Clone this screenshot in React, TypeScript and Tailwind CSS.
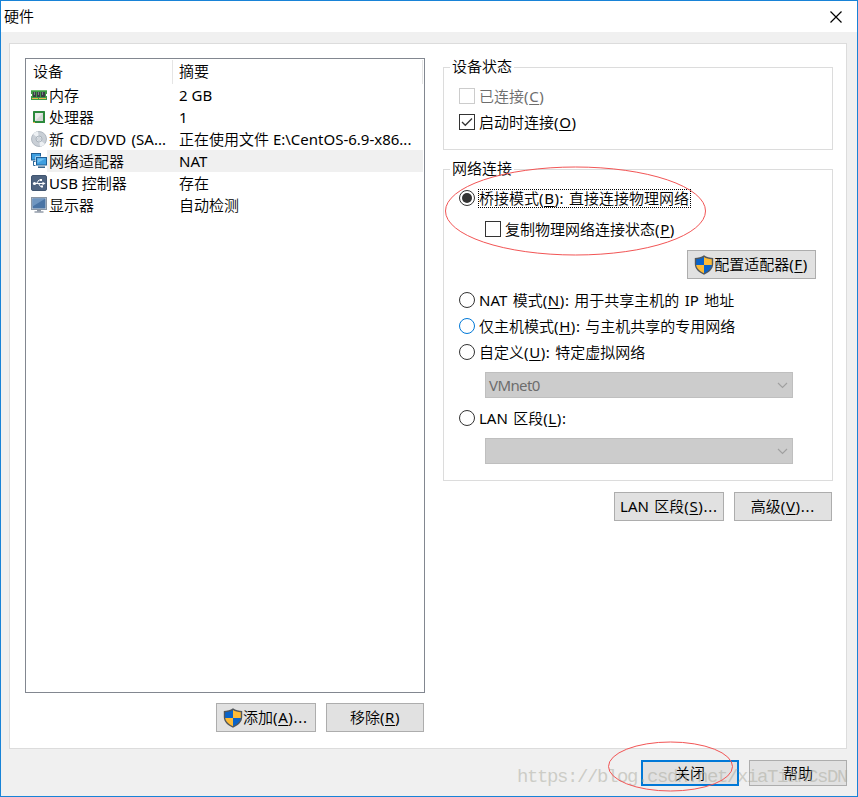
import { useState } from "react";
import type { ReactNode } from "react";
import { clsx } from "clsx";

type Device = {
  id: string;
  name: string;
  summary: string;
  icon: ReactNode;
};

function MemoryIcon() {
  return (
    <svg width="16" height="16" viewBox="0 0 16 16" shapeRendering="crispEdges">
      <rect x="0" y="3" width="16" height="10" fill="#3f9a45" />
      <rect x="0" y="3" width="16" height="1" fill="#6fbf73" />
      <rect x="2" y="5" width="3" height="5" fill="#3a3f45" />
      <rect x="6" y="5" width="3" height="5" fill="#3a3f45" />
      <rect x="10" y="5" width="4" height="5" fill="#3a3f45" />
      <rect x="3" y="5" width="1" height="3" fill="#7b8188" />
      <rect x="7" y="5" width="1" height="3" fill="#7b8188" />
      <rect x="11" y="5" width="1" height="3" fill="#7b8188" />
      <rect x="1" y="11" width="6" height="1" fill="#e7b94f" />
      <rect x="8" y="11" width="7" height="1" fill="#e7b94f" />
      <rect x="0" y="7" width="1" height="2" fill="#fff" />
      <rect x="15" y="7" width="1" height="2" fill="#fff" />
    </svg>
  );
}

function CpuIcon() {
  return (
    <svg width="16" height="16" viewBox="0 0 16 16">
      <rect x="2" y="2" width="12" height="12" rx="0.5" fill="#2c8a3c" />
      <rect x="4" y="4" width="8" height="8" fill="#d3d6d4" />
      <path d="M4 4h8l-8 8z" fill="#e9ebe9" />
      <path d="M2 13.500h2" stroke="#e7b94f" />
    </svg>
  );
}

function DiscIcon() {
  return (
    <svg width="16" height="16" viewBox="0 0 16 16">
      <circle cx="8" cy="8" r="7.500" fill="#c9cfd6" stroke="#a3acb6" strokeWidth="0.8" />
      <path d="M8 8L2 3a8 8 0 0 1 5-2.500zM8 8l6 5a8 8 0 0 1-5 2.500z" fill="#eef1f4" />
      <circle cx="8" cy="8" r="3" fill="#dfe4e9" stroke="#99a3ae" strokeWidth="0.7" />
      <circle cx="8" cy="8" r="1.200" fill="#fff" stroke="#8f99a5" strokeWidth="0.5" />
    </svg>
  );
}

function NetworkIcon() {
  return (
    <svg width="16" height="16" viewBox="0 0 16 16">
      <path d="M2.500 8v4.500h3" fill="none" stroke="#2d6a9c" />
      <rect x="0.500" y="0.500" width="9" height="6.500" fill="#3f9fe0" stroke="#1f5f96" />
      <path d="M2 8.500h3" stroke="#2d6a9c" />
      <rect x="5.500" y="4.500" width="10" height="7.500" fill="#3f9fe0" stroke="#fff" strokeWidth="2" />
      <rect x="5.500" y="4.500" width="10" height="7.500" fill="#3f9fe0" stroke="#1f5f96" />
      <path d="M6.500 5.500h8l-8 4.500z" fill="#6fc0f2" />
      <path d="M7 14.200h7" stroke="#2f5f88" strokeWidth="1.500" />
    </svg>
  );
}

function UsbIcon() {
  return (
    <svg width="16" height="16" viewBox="0 0 16 16">
      <rect x="0.500" y="0.500" width="15" height="15" rx="1.500" fill="#4f6480" stroke="#415570" />
      <circle cx="3.500" cy="8.500" r="1.600" fill="#fff" />
      <path d="M3 8.500h9M5.500 8.500l2.500-3.500h1.500M7.500 8.500l2 3h1.500" stroke="#fff" fill="none" />
      <path d="M11.500 6.700v3.600l3-1.800z" fill="#fff" />
      <rect x="9" y="4" width="2" height="2" fill="#fff" />
      <rect x="10" y="10.500" width="2" height="2" fill="#fff" />
    </svg>
  );
}

function DisplayIcon() {
  return (
    <svg width="16" height="16" viewBox="0 0 16 16">
      <rect x="0.500" y="0.500" width="15" height="12" fill="#d5dae1" stroke="#8b96a4" />
      <rect x="1.500" y="1.500" width="13" height="10" fill="#4a74a5" />
      <path d="M1.500 1.500h13l-13 8z" fill="#7096c0" />
      <path d="M6 13h4v1.500H6z" fill="#8d97a3" />
      <path d="M3.500 15h9" stroke="#8b96a4" strokeWidth="1.400" />
    </svg>
  );
}

function ShieldIcon() {
  return (
    <svg width="20" height="20" viewBox="0 0 20 20" className="mt-px -ml-px shrink-0">
      <path d="M10 .3C7.500 2.200 4 3 .8 3V9c0 5.200 4.200 8.300 9.200 10.800C15 17.300 19.200 14.200 19.200 9V3C16 3 12.500 2.200 10 .3z" fill="#53575b" />
      <path d="M10 2C8 3.400 5 4.100 2.200 4.300V10H10z" fill="#0a63c8" />
      <path d="M10 2c2 1.400 5 2.100 7.800 2.300V10H10z" fill="#fdbb36" />
      <path d="M2.200 10H10v8.300C6 16.300 2.700 13.700 2.200 10z" fill="#fdbb36" />
      <path d="M17.800 10H10v8.300c4-2 7.300-4.600 7.800-8.300z" fill="#0a63c8" />
    </svg>
  );
}

const devices: Device[] = [
  { id: "memory", name: "内存", summary: "2 GB", icon: <MemoryIcon /> },
  { id: "cpu", name: "处理器", summary: "1", icon: <CpuIcon /> },
  { id: "cd", name: "新 CD/DVD (SA...", summary: "正在使用文件 E:\\CentOS-6.9-x86...", icon: <DiscIcon /> },
  { id: "network", name: "网络适配器", summary: "NAT", icon: <NetworkIcon /> },
  { id: "usb", name: "USB 控制器", summary: "存在", icon: <UsbIcon /> },
  { id: "display", name: "显示器", summary: "自动检测", icon: <DisplayIcon /> },
];

// label followed by its underlined access key
function Label({ text, hot, rest = "" }: { text: string; hot: string; rest?: string }) {
  return (
    <span className="whitespace-pre [word-spacing:1.5px]">
      {text}
      <span className="tracking-[0.6px]">
        (<span className="underline decoration-1 underline-offset-2">{hot}</span>)
      </span>
      <span className={clsx(rest === "..." && "tracking-[0.8px]")}>{rest}</span>
    </span>
  );
}

function Button({ className, children }: { className: string; children: ReactNode }) {
  return (
    <button
      className={clsx(
        "flex shrink-0 items-center justify-center border border-[#adadad] bg-[#e1e1e1] pb-px whitespace-pre",
        className
      )}
    >
      {children}
    </button>
  );
}

function Checkbox({ checked, disabled }: { checked?: boolean; disabled?: boolean }) {
  return (
    <span
      className={clsx(
        "flex size-4 shrink-0 items-center justify-center border bg-white",
        disabled ? "border-[#cccccc]" : "border-[#333333]"
      )}
    >
      {checked && (
        <svg width="14" height="14" viewBox="0 0 14 14">
          <path d="M2 7l3.300 3.300L12 3.500" fill="none" stroke="#333" strokeWidth="1.300" />
        </svg>
      )}
    </span>
  );
}

function Radio({ checked, hover }: { checked?: boolean; hover?: boolean }) {
  return (
    <span
      className={clsx(
        "flex size-4 shrink-0 items-center justify-center rounded-full border bg-white",
        hover ? "border-[#0078d7]" : "border-[#333333]"
      )}
    >
      {checked && <span className="size-2.5 rounded-full bg-[#333333]" />}
    </span>
  );
}

function Combo({ value }: { value: string }) {
  return (
    <div className="ml-[41px] flex h-[26px] w-[308px] items-center justify-between border border-[#bfbfbf] bg-[#cccccc] pr-[4px] pl-[3px] text-[#6d6d6d]">
      <span className="tracking-[-0.6px]">{value}</span>
      <svg width="11" height="7" viewBox="0 0 11 7">
        <path d="M1 1l4.500 4.500L10 1" fill="none" stroke="#a0a0a0" strokeWidth="1.100" />
      </svg>
    </div>
  );
}

function Group({ title, className, children }: { title: string; className: string; children: ReactNode }) {
  return (
    <section className={clsx("w-[390px] border border-[#dcdcdc]", className)}>
      <h2 className="-mt-[12px] ml-[6px] h-[21px] w-[64px] bg-white pl-[2px] whitespace-nowrap">{title}</h2>
      {children}
    </section>
  );
}

export default function App() {
  const [selected, setSelected] = useState("network");

  return (
    <div className="relative flex h-[797px] w-[858px] flex-col border border-[#1883d7] bg-[#f0f0f0] font-['Noto_Sans','Noto_Sans_CJK_SC_DemiLight','Noto_Sans_CJK_SC_Light','Noto_Sans_CJK_SC',sans-serif] text-[15px] leading-5 text-black">
      <header className="flex h-[31px] shrink-0 items-center justify-between bg-white pr-[15px] pl-[3px]">
        <h1 className="pb-[2px]">硬件</h1>
        <svg width="12" height="12" viewBox="0 0 12 12">
          <path d="M.5.500l11 11M11.500.500l-11 11" stroke="#000" strokeWidth="1.200" />
        </svg>
      </header>

      <main className="mt-[11px] ml-[8px] flex h-[706px] w-[838px] shrink-0 border border-[#dcdcdc] bg-white pt-[14px] pl-[15px]">
        <div className="w-[400px]">
          <div className="h-[635px] border border-[#828790] pt-px pr-px">
            <div className="flex h-6">
              <span className="w-[147px] border-r border-[#e5e5e5] pt-px pl-[7px]">设备</span>
              <span className="flex-1 border-r border-[#e5e5e5] pt-px pl-[6px]">摘要</span>
            </div>
            {devices.map((d) => (
              <div key={d.id} className="flex h-[22px] pl-[5px]" onClick={() => setSelected(d.id)}>
                <span className="w-4 shrink-0 pt-[3px]">{d.icon}</span>
                <div
                  className={clsx(
                    "flex flex-1 items-center whitespace-pre",
                    selected === d.id && "bg-[#f0f0f0]"
                  )}
                >
                  <span className={clsx("w-[132px] shrink-0 pl-[2px]", d.id === "cd" && "[word-spacing:1.5px]")}>
                    {d.name}
                  </span>
                  <span>{d.summary}</span>
                </div>
              </div>
            ))}
          </div>
          <div className="mt-[10px] flex justify-end gap-[10px] pr-px">
            <Button className="h-[29px] w-[100px]">
              <ShieldIcon />
              <Label text="添加" hot="A" rest="..." />
            </Button>
            <Button className="h-[29px] w-[98px]">
              <Label text="移除" hot="R" />
            </Button>
          </div>
        </div>

        <div className="ml-[18px] w-[390px] pt-[9px]">
          <Group title="设备状态" className="h-[83px]">
            <div className="mt-[9px] flex items-center gap-[4px] pl-[15px] text-[#6d6d6d]">
              <Checkbox disabled />
              <Label text="已连接" hot="C" />
            </div>
            <div className="mt-[6px] flex items-center gap-[4px] pl-[15px]">
              <Checkbox checked />
              <Label text="启动时连接" hot="O" />
            </div>
          </Group>

          <Group title="网络连接" className="mt-[19px] h-[312px]">
            <div className="mt-[9px] flex h-5 items-center gap-[3px] pl-[15px]">
              <Radio checked />
              <span className="flex h-[19px] w-[213px] items-center border border-dotted border-black">
                <Label text="桥接模式" hot="B" rest=": 直接连接物理网络" />
              </span>
            </div>
            <div className="mt-[11px] flex h-5 items-center gap-[4px] pl-[41px]">
              <Checkbox />
              <Label text="复制物理网络连接状态" hot="P" />
            </div>
            <Button className="mt-[11px] ml-[243px] h-[29px] w-[129px]">
              <ShieldIcon />
              <Label text="配置适配器" hot="F" />
            </Button>
            <div className="mt-[11px] flex h-5 items-center gap-[4px] pl-[15px]">
              <Radio />
              <Label text="NAT 模式" hot="N" rest=": 用于共享主机的 IP 地址" />
            </div>
            <div className="mt-[6px] flex h-5 items-center gap-[4px] pl-[15px]">
              <Radio hover />
              <Label text="仅主机模式" hot="H" rest=": 与主机共享的专用网络" />
            </div>
            <div className="mt-[6px] mb-[10px] flex h-5 items-center gap-[4px] pl-[15px]">
              <Radio />
              <Label text="自定义" hot="U" rest=": 特定虚拟网络" />
            </div>
            <Combo value="VMnet0" />
            <div className="mt-[10px] mb-[10px] flex h-5 items-center gap-[4px] pl-[15px]">
              <Radio />
              <Label text="LAN 区段" hot="L" rest=":" />
            </div>
            <Combo value="" />
          </Group>

          <div className="mt-[11px] flex justify-end gap-[10px] pr-px">
            <Button className="h-[29px] w-[110px]">
              <Label text="LAN 区段" hot="S" rest="..." />
            </Button>
            <Button className="h-[29px] w-[98px]">
              <Label text="高级" hot="V" rest="..." />
            </Button>
          </div>
        </div>
      </main>

      <footer className="mt-[11px] flex justify-end gap-[10px] pr-[10px]">
        <button className="flex h-[26px] w-[98px] items-center justify-center border-2 border-[#0078d7] bg-[#e1e1e1]">
          关闭
        </button>
        <Button className="h-[26px] w-[98px]">帮助</Button>
      </footer>

      <span className="pointer-events-none absolute top-[766px] left-[516px] font-['Liberation_Mono',monospace] text-[19px] tracking-[-1.4px] whitespace-nowrap text-[#a8a89c]/50">
        https://blog.csdn.net/xiaTianCsDN
      </span>

      {/* red pen marks */}
      <svg className="pointer-events-none absolute top-[165px] left-[443px]" width="264" height="92">
        <ellipse cx="131.500" cy="45" rx="130" ry="44" fill="none" stroke="#f25555" />
      </svg>
      <svg className="pointer-events-none absolute top-[740px] left-[606px]" width="128" height="54">
        <ellipse cx="63.500" cy="25.500" rx="62" ry="24.500" fill="none" stroke="#f25555" />
      </svg>
    </div>
  );
}
